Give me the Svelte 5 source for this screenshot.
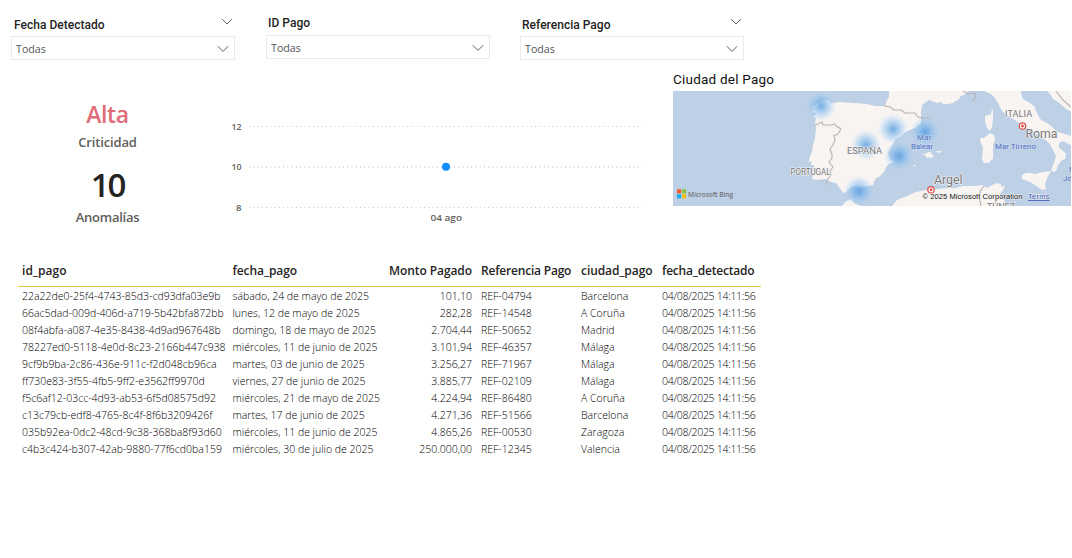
<script>
  const slicers = [
    { label: 'Fecha Detectado', caret: true, cls: 'first' },
    { label: 'ID Pago', caret: false, cls: 'second' },
    { label: 'Referencia Pago', caret: true, cls: 'third' }
  ];
  const headers = ['id_pago', 'fecha_pago', 'Monto Pagado', 'Referencia Pago', 'ciudad_pago', 'fecha_detectado'];
  const rows = [
    ['22a22de0-25f4-4743-85d3-cd93dfa03e9b', 'sábado, 24 de mayo de 2025', '101,10', 'REF-04794', 'Barcelona'],
    ['66ac5dad-009d-406d-a719-5b42bfa872bb', 'lunes, 12 de mayo de 2025', '282,28', 'REF-14548', 'A Coruña'],
    ['08f4abfa-a087-4e35-8438-4d9ad967648b', 'domingo, 18 de mayo de 2025', '2.704,44', 'REF-50652', 'Madrid'],
    ['78227ed0-5118-4e0d-8c23-2166b447c938', 'miércoles, 11 de junio de 2025', '3.101,94', 'REF-46357', 'Málaga'],
    ['9cf9b9ba-2c86-436e-911c-f2d048cb96ca', 'martes, 03 de junio de 2025', '3.256,27', 'REF-71967', 'Málaga'],
    ['ff730e83-3f55-4fb5-9ff2-e3562ff9970d', 'viernes, 27 de junio de 2025', '3.885,77', 'REF-02109', 'Málaga'],
    ['f5c6af12-03cc-4d93-ab53-6f5d08575d92', 'miércoles, 21 de mayo de 2025', '4.224,94', 'REF-86480', 'A Coruña'],
    ['c13c79cb-edf8-4765-8c4f-8f6b3209426f', 'martes, 17 de junio de 2025', '4.271,36', 'REF-51566', 'Barcelona'],
    ['035b92ea-0dc2-48cd-9c38-368ba8f93d60', 'miércoles, 11 de junio de 2025', '4.865,26', 'REF-00530', 'Zaragoza'],
    ['c4b3c424-b307-42ab-9880-77f6cd0ba159', 'miércoles, 30 de julio de 2025', '250.000,00', 'REF-12345', 'Valencia']
  ];
  const detected = '04/08/2025 14:11:56';
  const heat = [[821, 106], [893, 129], [866, 145], [925, 132], [899, 156], [859, 191]];
</script>

<main>
  <header>
    {#each slicers as s}
      <section class="slicer {s.cls}">
        <div class="slicer-head">
          <span>{s.label}</span>
          {#if s.caret}
            <svg width="12" height="8" viewBox="0 0 12 8"><path d="M1.2 1.2 6 6l4.8-4.8" /></svg>
          {/if}
        </div>
        <div class="select">
          <span>Todas</span>
          <svg width="12" height="8" viewBox="0 0 12 8"><path d="M.8 1.2 6 6.4l5.2-5.2" /></svg>
        </div>
      </section>
    {/each}
  </header>

  <div class="middle">
    <section class="cards">
      <strong class="alta">Alta</strong>
      <span class="crit">Criticidad</span>
      <strong class="ten">10</strong>
      <span class="anom">Anomalías</span>
    </section>

    <svg class="chart" width="430" height="150" viewBox="225 80 430 150">
      <g class="grid">
        <line x1="249" y1="126.5" x2="642" y2="126.5" />
        <line x1="249" y1="167" x2="642" y2="167" class="mid" />
        <line x1="249" y1="207.5" x2="642" y2="207.5" />
      </g>
      <g class="axis">
        <text x="231.5" y="130" textLength="10" lengthAdjust="spacingAndGlyphs">12</text>
        <text x="231.5" y="170" textLength="10" lengthAdjust="spacingAndGlyphs">10</text>
        <text x="236" y="211" textLength="5.5" lengthAdjust="spacingAndGlyphs">8</text>
        <text x="430.5" y="221" textLength="31.5" lengthAdjust="spacingAndGlyphs">04 ago</text>
      </g>
      <circle cx="446" cy="166.7" r="4" fill="#118dff" />
    </svg>

    <section class="map">
      <h2>Ciudad del Pago</h2>
      <svg width="398" height="115" viewBox="673 91 398 115">
        <defs>
          <radialGradient id="spot">
            <stop offset="0" stop-color="#4a94de" stop-opacity=".75" />
            <stop offset=".3" stop-color="#5fa6e8" stop-opacity=".58" />
            <stop offset=".65" stop-color="#85bff4" stop-opacity=".36" />
            <stop offset="1" stop-color="#a5d1fa" stop-opacity="0" />
          </radialGradient>
        </defs>
        <rect x="673" y="91" width="398" height="115" fill="#bed0e5" />
        <g class="land">
          <path d="M889 91v6l-2 3-2 6-10 0-8-2-12-1-16-1-8 1-2-3-3 1-2-1-3 2-5 2-4 4 2 1-2 3 4 1-2 4 2 1-1 5 1 5-1 10-2 7-1 6-3 9 0 2 3-1-1 4 3 0-1 8-1 6 5 1 8-1 6 3 5 1 4 5 3 5 3-1 3-3 5-3 9 1 6-1 4-1 1-3 2-4 3-1 5-5 2-5 3-3 5-2-4-3-2-6 3-6 4-7 5-3 7-6 8-3 6-5v-7-4l1-7 7-5 8 3 4-1 2 2 5 0 5-1 6-4 2-3 5-2 5-7z" />
          <path d="M984 91l7 3 4 4 4 7 3 6 6 5 7 4 5 4 7 4 8 5 8 5 6 5 3 5 4 8-2 7-3 7 3 2 2-1 2-6 4-5 3-1 1-5-4-4-3-2 0-5 4-2 4 2 5 3v-10l-7-2-7-2-4-3-4-4-10-6-3-6-3-7-4-3-7-4-2-6 1-4z" />
          <path d="M1047 91l4 4 2 4 5 3 7 6 6 4V91zM992 109l-1 5-6 2 0 6 2 6 3 3 2-4 1-7 0-10zM990 133l-6 5-4 0 1 6 2 3-1 13 2 3 5 0 2-3 2-1 0-14 2-5-1-5zM1022 175l4-2 5 0 4 1 8-2 8-1-4 7-2 7 1 4-4 1-4-3-8-5-8-3z" />
          <path d="M922 155l7-3 3 0-2 1 4 3-2 2-3-1-2 1-2-3zM936 151l4 0 2 1-4 1zM914 165l2 0 0 1-3 0z" />
          <path d="M842 206l3-4 6-3 3 4 7 3zM892 206l5-6 10-4 9-4 10-2 11-1 11-1 7 0 8-2 12 0 8-1 4 3 5-3 5-2 4 1 0 3 4-2-2 5-3 4 2 4 3 3-3 5z" />
        </g>
        <g class="border">
          <path d="M815 125l3-1 4-2 1 3 7 0 5-1 1 2 5 3-4 6-3 0 1 5-2 5-3 4 2 5v4l-3 4 4 5-3 4 1 4-4 5 0 5" />
          <path d="M884 106l6 1 4 3 7 0 4 3 10 0 3 4 5 1 8 0M963 91l5 3 7-1 1 3-3 5M1056 91l6 8 9 8M984 186l-3 4-2 6 2 10" />
        </g>
        {#each heat as p}
          <circle cx={p[0]} cy={p[1]} r="15" fill="url(#spot)" />
        {/each}
        <g class="place">
          <text x="1005" y="117" font-size="9" textLength="27">ITALIA</text>
          <text x="847" y="154" font-size="9" textLength="35" lengthAdjust="spacingAndGlyphs">ESPAÑA</text>
          <text x="790.500" y="175" font-size="9" textLength="40" lengthAdjust="spacingAndGlyphs">PORTUGAL</text>
          <text x="987" y="210" font-size="9" textLength="28">TÚNEZ</text>
          <text x="1025.5" y="138.300" font-size="12.5" textLength="32" lengthAdjust="spacingAndGlyphs">Roma</text>
          <text x="934" y="184" font-size="12.5" textLength="28.5">Argel</text>
        </g>
        <g class="sea">
          <text x="917" y="139.500" textLength="14.500">Mar</text>
          <text x="911" y="148.500" textLength="22">Balear</text>
          <text x="995" y="148.5" textLength="41">Mar Tirreno</text>
          <text x="1069" y="172">M</text>
          <text x="1063" y="180.5">Jónico</text>
        </g>
        <g class="capital">
          <circle cx="1022.5" cy="126" r="3.2" /><circle cx="1022.5" cy="126" r="1" />
          <circle cx="931" cy="189.8" r="3.2" /><circle cx="931" cy="189.8" r="1" />
        </g>
        <path fill="#f25f2c" d="M677 189.200h4.200v4.200H677z" /><path fill="#8bc53f" d="M682 189.200h4.200v4.200H682z" />
        <path fill="#15aef0" d="M677 194.200h4.200v4.200H677z" /><path fill="#fcbb17" d="M682 194.200h4.200v4.200H682z" />
        <text class="bing" x="688" y="197" textLength="45" lengthAdjust="spacingAndGlyphs">Microsoft Bing</text>
        <text class="copy" x="922.500" y="199" textLength="100">© 2025 Microsoft Corporation</text>
        <text class="terms" x="1028" y="199" textLength="21.500">Terms</text>
        <path d="M1028 200.500h21.500" stroke="#3453b4" stroke-width=".8" />
      </svg>
    </section>
  </div>

  <table>
    <colgroup><col /><col /><col /><col /><col /><col /></colgroup>
    <thead>
      <tr>{#each headers as h, i}<th class="h{i}">{h}</th>{/each}</tr>
    </thead>
    <tbody>
      {#each rows as row}
        <tr>
          {#each [...row, detected] as cell, i}<td class="c{i}">{cell}</td>{/each}
        </tr>
      {/each}
    </tbody>
  </table>
</main>

<style>
  :global(body) { margin: 0; background: #fff; }
  main { width: 1072px; height: 558px; overflow: hidden; background: #fff; font-family: "Open Sans", sans-serif; color: #252423; }
  header { display: flex; height: 71px; padding-left: 11px; gap: 30px; box-sizing: border-box; }
  .slicer { width: 224px; padding-top: 15px; box-sizing: border-box; }
  .second { padding-top: 14px; margin-left: 1px; }
  .slicer-head { display: flex; justify-content: space-between; height: 21px; padding: 0 2px 0 3px; font: 500 12px/18px Roboto, sans-serif; letter-spacing: .02px; }
  .third .slicer-head { padding-left: 2px; }
  .second .slicer-head { padding-left: 2px; line-height: 17px; }
  .slicer-head span { position: relative; top: .5px; }
  .slicer-head svg { margin: 3px 0 0; }
  svg { display: block; }
  .slicer svg path { fill: none; stroke: #605e5c; stroke-width: 1; }
  .select { height: 24px; box-sizing: border-box; border: 1px solid #ebebeb; display: flex; align-items: center; justify-content: space-between; padding: 2px 5px 0 4px; font-size: 10.700px; color: #555; }
  .middle { display: flex; height: 189px; }
  .cards { width: 215px; display: flex; flex-direction: column; align-items: center; color: #605e5c; white-space: nowrap; }
  .cards strong { font-weight: 600; }
  .cards .alta { margin-top: 27px; font-size: 23px; line-height: 32px; color: #e06c7a; letter-spacing: -.4px; }
  .cards .crit { margin-top: 3px; font: 600 13px/18px "Open Sans", sans-serif; letter-spacing: -.15px; }
  .cards .ten { margin-top: 12px; font-size: 33px; line-height: 44px; letter-spacing: -2.200px; color: #252423; }
  .cards .anom { margin-top: 1px; font: 600 13px/18px "Open Sans", sans-serif; letter-spacing: -.25px; }
  .chart { margin: 9px 18px 0 10px; }
  .grid line { stroke: #c8c6c4; stroke-width: 1; stroke-dasharray: 1 3.27; }
  .grid .mid { stroke: #dddcda; stroke-width: 2; }
  .axis text { font: 600 9.500px "Open Sans", sans-serif; fill: #605e5c; }
  .map h2 { margin: 0; height: 20px; font: 400 13.500px/17px Roboto, sans-serif; letter-spacing: .22px; color: #111; }
  .land { fill: #f7f4f2; stroke: none; }
  .border { fill: none; stroke: #b7b4b4; stroke-width: 1.200; stroke-linejoin: round; }
  .place text, .sea text { font-family: Roboto, sans-serif; paint-order: stroke; stroke: #f7f4f2; stroke-width: 1.200; fill: #77797d; }
  .sea text { font-size: 8px; fill: #4c6bc2; stroke: #cad9ec; }
  .capital circle:nth-child(odd) { fill: #fff; stroke: #df4b43; stroke-width: 1.200; }
  .capital circle:nth-child(even) { fill: #df4b43; stroke: #df4b43; }
  .bing { font: 600 7px "Open Sans", sans-serif; fill: #6f737b; }
  .copy, .terms { font: 7.500px "Liberation Sans", sans-serif; fill: #111; paint-order: stroke; stroke: #f4f4f4; stroke-width: .8; }
  .terms { fill: #3453b4; }
  table { margin-left: 18px; width: 743px; table-layout: fixed; border-collapse: collapse; }
  col:nth-child(1) { width: 210.500px; } col:nth-child(2) { width: 151.500px; } col:nth-child(3) { width: 97px; }
  col:nth-child(4) { width: 100px; } col:nth-child(5) { width: 81px; } col:nth-child(6) { width: 103px; }
  th { height: 26px; padding: 1px 4px 1px; box-sizing: border-box; border-bottom: 1px solid #e3c84b; font-size: 12px; font-weight: 600; line-height: 20px; text-align: left; vertical-align: top; white-space: nowrap; color: #252423; letter-spacing: -.08px; }
  tbody tr:first-child td { height: 18px; padding-top: 1px; }
  td { height: 17px; padding: 0 4px; box-sizing: border-box; font-size: 10.500px; line-height: 16px; font-weight: 300; color: #000; white-space: nowrap; }
  .h2, .c2 { text-align: right; padding-right: 5px; }
  .h0 { letter-spacing: .05px; }
  .h3, .h5 { letter-spacing: -.2px; }
  .c5 { letter-spacing: -.28px; }
</style>
